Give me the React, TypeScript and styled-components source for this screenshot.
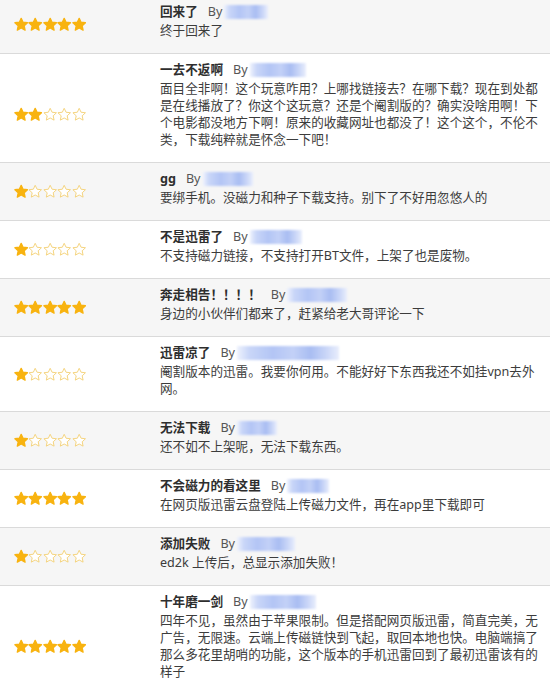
import React from "react";
import styled, { createGlobalStyle } from "styled-components";

const GlobalStyle = createGlobalStyle`
  html, body {
    margin: 0;
    padding: 0;
    background: #ffffff;
  }
  body {
    font-family: "Noto Sans", "Noto Sans CJK SC", sans-serif;
    color: #333333;
    overflow: hidden;
  }
`;

type Review = {
  title: string;
  rating: number;
  name: number;
  body: string;
  lines: number;
};

const reviews: Review[] = [
  { title: "回来了", rating: 5, name: 44, body: "终于回来了", lines: 1 },
  {
    title: "一去不返啊",
    rating: 2,
    name: 56,
    body:
      "面目全非啊！这个玩意咋用？上哪找链接去？在哪下载？现在到处都是在线播放了？你这个这玩意？还是个阉割版的？确实没啥用啊！下个电影都没地方下啊！原来的收藏网址也都没了！这个这个，不伦不类，下载纯粹就是怀念一下吧！",
    lines: 4,
  },
  { title: "gg", rating: 1, name: 50, body: "要绑手机。没磁力和种子下载支持。别下了不好用忽悠人的", lines: 1 },
  { title: "不是迅雷了", rating: 1, name: 52, body: "不支持磁力链接，不支持打开BT文件，上架了也是废物。", lines: 1 },
  { title: "奔走相告！！！！", rating: 5, name: 60, body: "身边的小伙伴们都来了，赶紧给老大哥评论一下", lines: 1 },
  {
    title: "迅雷凉了",
    rating: 1,
    name: 102,
    body: "阉割版本的迅雷。我要你何用。不能好好下东西我还不如挂vpn去外网。",
    lines: 2,
  },
  { title: "无法下载", rating: 1, name: 40, body: "还不如不上架呢，无法下载东西。", lines: 1 },
  { title: "不会磁力的看这里", rating: 5, name: 42, body: "在网页版迅雷云盘登陆上传磁力文件，再在app里下载即可", lines: 1 },
  { title: "添加失败", rating: 1, name: 58, body: "ed2k 上传后，总显示添加失败！", lines: 1 },
  {
    title: "十年磨一剑",
    rating: 5,
    name: 66,
    body:
      "四年不见，虽然由于苹果限制。但是搭配网页版迅雷，简直完美，无广告，无限速。云端上传磁链快到飞起，取回本地也快。电脑端搞了那么多花里胡哨的功能，这个版本的手机迅雷回到了最初迅雷该有的样子",
    lines: 4,
  },
];

const List = styled.div`
  margin-top: -4px;
  width: 550px;
`;

const Row = styled.div<{ $shaded: boolean }>`
  display: flex;
  background: ${(p) => (p.$shaded ? "#f6f6f6" : "#ffffff")};
  border-bottom: 1px solid #dadada;
`;

const StarCell = styled.div<{ $drop: number }>`
  width: 146px;
  padding-left: 14px;
  padding-top: ${(p) => p.$drop}px;
  display: flex;
  align-items: center;
`;

const Stars = styled.div`
  display: flex;
`;

const TextCell = styled.div`
  width: 384px;
  padding: 6px 0 14px 0;
`;

const TitleLine = styled.div`
  font-size: 12.6px;
  line-height: 20px;
  white-space: nowrap;
  display: flex;
  align-items: center;
  text-spacing-trim: space-all;
`;

const Title = styled.span`
  font-weight: 700;
  color: #2e2e2e;
`;

const By = styled.span`
  margin-left: 10px;
  color: #555555;
`;

const Hidden = styled.span<{ $w: number }>`
  display: inline-block;
  margin-left: 2px;
  height: 14px;
  width: ${(p) => p.$w}px;
  background: linear-gradient(
    90deg,
    #eef2fd 0%,
    #c9d6f8 12%,
    #b3c5f5 35%,
    #c3d1f7 55%,
    #a9bdf2 72%,
    #cbd7f8 88%,
    #e9eefc 100%
  );
  filter: blur(1px);
`;

const Body = styled.div`
  font-size: 12.6px;
  line-height: 17px;
  color: #3c3c3c;
  word-break: break-all;
  line-break: strict;
  text-spacing-trim: space-all;
`;

const STAR_PATH =
  "M12 2.2L15.12 8.71L22.46 9.6L17.04 14.64L18.47 21.9L12 18.3L5.53 21.9L6.96 14.64L1.54 9.6L8.88 8.71Z";

function Star({ filled }: { filled: boolean }) {
  return (
    <svg width="14.4" height="14.4" viewBox="0 0 24 24">
      <path
        d={STAR_PATH}
        fill={filled ? "#f8b310" : "#ffffff"}
        stroke={filled ? "#f8b310" : "#f3d27a"}
        strokeWidth={filled ? 2.2 : 1.6}
        strokeLinejoin="round"
      />
    </svg>
  );
}

function Rating({ value }: { value: number }) {
  return (
    <Stars>
      {[0, 1, 2, 3, 4].map((i) => (
        <Star key={i} filled={i < value} />
      ))}
    </Stars>
  );
}

export default function App() {
  return (
    <>
      <GlobalStyle />
      <List>
        {reviews.map((r, i) => (
          <Row key={i} $shaded={i % 2 === 0}>
            <StarCell $drop={r.lines > 2 ? 12 : 0}>
              <Rating value={r.rating} />
            </StarCell>
            <TextCell>
              <TitleLine>
                <Title>{r.title}</Title>
                <By>By</By>
                <Hidden $w={r.name} />
              </TitleLine>
              <Body>{r.body}</Body>
            </TextCell>
          </Row>
        ))}
      </List>
    </>
  );
}
